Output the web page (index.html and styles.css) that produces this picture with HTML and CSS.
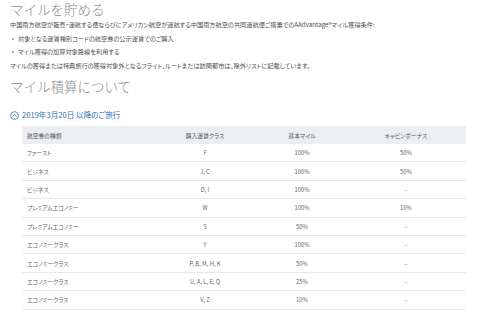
FILE: index.html
```html
<!DOCTYPE html>
<html lang="ja">
<head>
<meta charset="utf-8">
<title>マイルを貯める</title>
<link rel="stylesheet" href="styles.css">
</head>
<body>
<main class="page">
  <h1 class="title">マイルを貯める</h1>
  <p class="text">中国南方航空が販売・運航する便ならびにアメリカン航空が運航する中国南方航空の共同運航便ご搭乗でのAAdvantage®マイル獲得条件:</p>
  <ul class="bullets">
    <li>対象となる運賃種別コードの航空券の公示運賃でのご購入</li>
    <li>マイル獲得の加算対象路線を利用する</li>
  </ul>
  <p class="text text-after">マイルの獲得または特典旅行の獲得対象外となるフライト、ルートまたは訪問都市は、除外リストに記載しています。</p>

  <h2 class="title title-2">マイル積算について</h2>
  <div class="toggle">
    <svg class="toggle-icon" viewBox="0 0 10 10" width="9" height="9" aria-hidden="true">
      <circle cx="5" cy="5" r="4.3" fill="none" stroke="#2e74b8" stroke-width="0.9"/>
      <path d="M3 5.9 L5 3.9 L7 5.9" fill="none" stroke="#2e74b8" stroke-width="0.9" stroke-linecap="round" stroke-linejoin="round"/>
    </svg>
    <span>2019年3月20日 以降のご旅行</span>
  </div>

  <div class="table">
    <div class="row head">
      <div class="c1">航空券の種類</div>
      <div class="cc">購入運賃クラス</div>
      <div class="cc">基本マイル</div>
      <div class="cc">キャビンボーナス</div>
    </div>
    <div class="row"><div class="c1">ファースト</div><div class="cc">F</div><div class="cc">100%</div><div class="cc">50%</div></div>
    <div class="row"><div class="c1">ビジネス</div><div class="cc">J, C</div><div class="cc">100%</div><div class="cc">50%</div></div>
    <div class="row"><div class="c1">ビジネス</div><div class="cc">D, I</div><div class="cc">100%</div><div class="cc">–</div></div>
    <div class="row"><div class="c1">プレミアムエコノミー</div><div class="cc">W</div><div class="cc">100%</div><div class="cc">10%</div></div>
    <div class="row"><div class="c1">プレミアムエコノミー</div><div class="cc">S</div><div class="cc">50%</div><div class="cc">–</div></div>
    <div class="row"><div class="c1">エコノミークラス</div><div class="cc">Y</div><div class="cc">100%</div><div class="cc">–</div></div>
    <div class="row"><div class="c1">エコノミークラス</div><div class="cc">P, B, M, H, K</div><div class="cc">50%</div><div class="cc">–</div></div>
    <div class="row"><div class="c1">エコノミークラス</div><div class="cc">U, A, L, E, Q</div><div class="cc">25%</div><div class="cc">–</div></div>
    <div class="row"><div class="c1">エコノミークラス</div><div class="cc">V, Z</div><div class="cc">10%</div><div class="cc">–</div></div>
  </div>
</main>
</body>
</html>
```
FILE: styles.css
```css
html, body {
  margin: 0;
  padding: 0;
  background: #ffffff;
}

body {
  font-family: "Noto Sans CJK JP", "Noto Sans", "DejaVu Sans", sans-serif;
  color: #505050;
  font-feature-settings: "palt";
}

.page {
  padding: 0 10px;
}

.title {
  margin: 1px 0 0;
  font-size: 13.5px;
  line-height: 16px;
  font-weight: 300;
  color: #8c8c8c;
  font-feature-settings: normal;
}

.title-2 {
  margin-top: 6.5px;
}

.text {
  margin: 2px 0 0;
  font-size: 6.2px;
  line-height: 12px;
  color: #505050;
  white-space: nowrap;
}

.text-after {
  margin-top: 1.5px;
}

.bullets {
  list-style: none;
  margin: 0;
  padding: 0;
}

.bullets li {
  position: relative;
  margin-top: 1.5px;
  padding-left: 8px;
  font-size: 6.2px;
  line-height: 12px;
  color: #505050;
}

.bullets li::before {
  content: "";
  position: absolute;
  left: 1.5px;
  top: 5px;
  width: 2px;
  height: 2px;
  border-radius: 50%;
  background: #9a9a9a;
}

.toggle {
  display: flex;
  align-items: center;
  gap: 3px;
  margin-top: 16px;
  height: 10px;
  color: #2e74b8;
  font-size: 7.6px;
  line-height: 10px;
}

.toggle-icon {
  display: block;
  flex: none;
}

.table {
  margin: 6px 0 0 12px;
  width: 444px;
  font-size: 5.8px;
  color: #666666;
}

.row {
  display: grid;
  grid-template-columns: 130px 106px 88px 120px;
  align-items: center;
  box-sizing: border-box;
  height: 18.4px;
  border-bottom: 1.5px solid #e8e9ea;
}

.row.head {
  height: 18px;
  background: #eceff1;
  border-bottom: none;
  color: #555555;
}

.c1 {
  padding-left: 5px;
}

.cc {
  text-align: center;
}
```
